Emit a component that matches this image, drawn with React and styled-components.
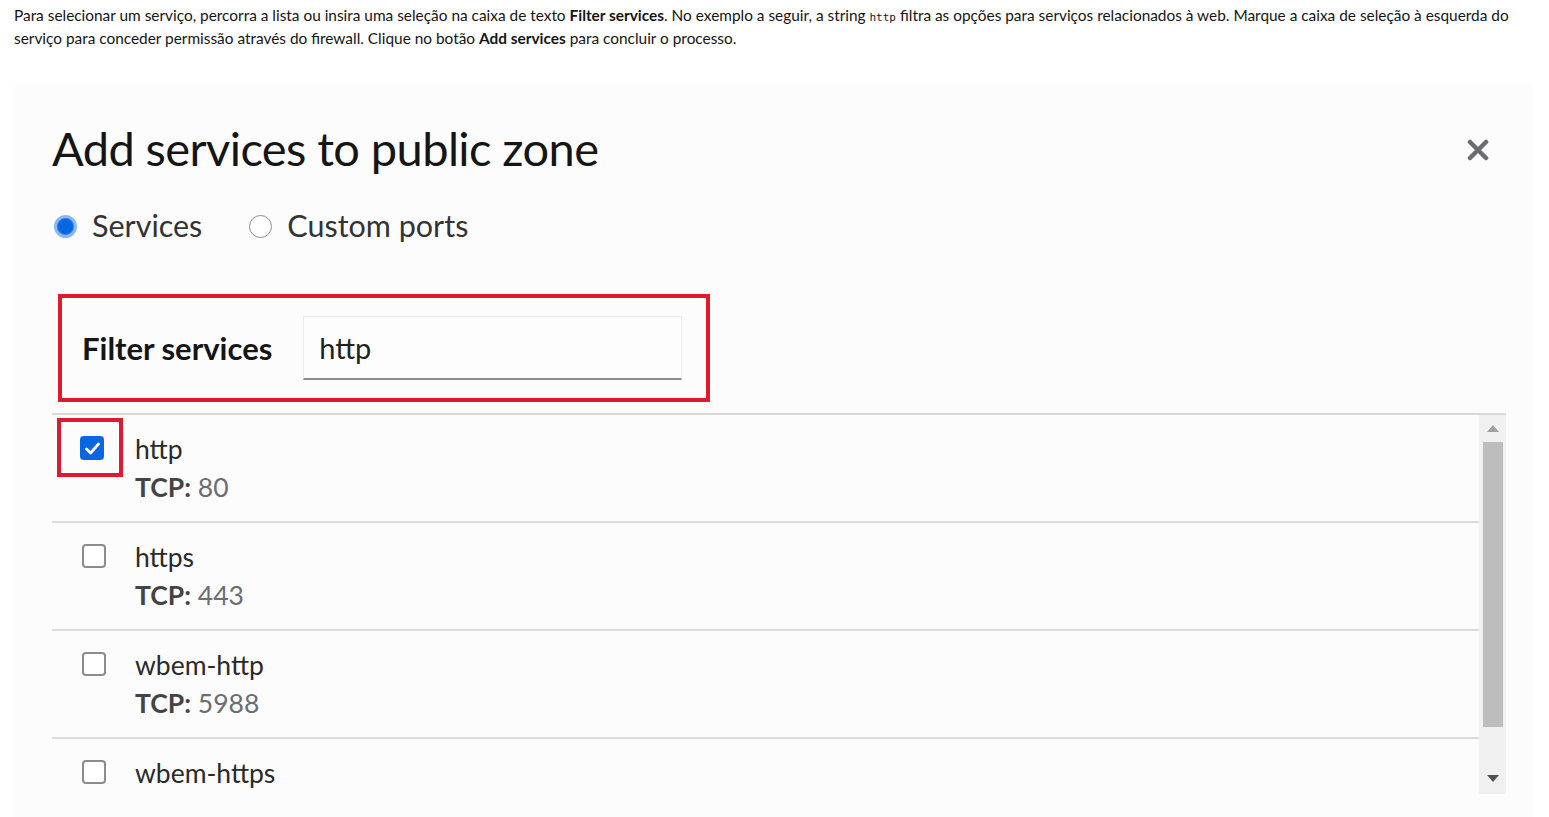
import React from "react";
import styled, { createGlobalStyle } from "styled-components";

const GlobalStyle = createGlobalStyle`
  html, body {
    margin: 0;
    padding: 0;
    background: #ffffff;
    overflow: hidden;
  }
  body {
    font-family: "Lato", "Liberation Sans", sans-serif;
    color: #151515;
  }
`;

const Page = styled.div`
  width: 1549px;
  height: 817px;
  overflow: hidden;
`;

const Intro = styled.p`
  margin: 0;
  padding: 4px 14px 0 14px;
  font-size: 15.4px;
  line-height: 23px;
  color: #151515;
  white-space: nowrap;
  b {
    font-weight: 700;
  }
  code {
    font-family: "DejaVu Sans Mono", monospace;
    font-size: 11px;
    line-height: 0;
  }
`;

const Shot = styled.section`
  margin: 34px 0 0 15px;
  width: 1518px;
  height: 740px;
  background: #fcfcfc;
  box-sizing: border-box;
  padding: 35px 27px 0 37px;
`;

const Header = styled.header`
  display: flex;
  align-items: center;
  justify-content: space-between;
`;

const Title = styled.h1`
  margin: 0;
  font-family: "Lato", sans-serif;
  font-weight: 400;
  font-size: 47px;
  line-height: 58px;
  letter-spacing: -0.6px;
  color: #151515;
`;

const Close = styled.button`
  border: 0;
  background: none;
  padding: 0;
  margin-right: 17px;
  margin-top: 4px;
  width: 22px;
  height: 22px;
  display: flex;
  color: #6a6e73;
`;

const RadioRow = styled.div`
  display: flex;
  align-items: center;
  gap: 47px;
  margin-top: 30px;
  padding-left: 2px;
`;

const RadioOption = styled.label`
  display: flex;
  align-items: center;
  gap: 15px;
  font-size: 30.5px;
  line-height: 36px;
  color: #333;
`;

const RadioDot = styled.span`
  width: 23px;
  height: 23px;
  border-radius: 50%;
  box-sizing: border-box;
  display: inline-block;
  margin-top: 3px;
  border: ${(p) => (p.$on ? "3px solid #8ab8f0" : "1.5px solid #8a8d90")};
  background: ${(p) => (p.$on ? "#0a66e0" : "#fff")};
  box-shadow: ${(p) => (p.$on ? "inset 0 0 0 1px #2f7ee8" : "none")};
`;

const Highlight = styled.div`
  border: 4px solid #e0192c;
  box-sizing: border-box;
`;

const FilterBox = styled(Highlight)`
  margin: 51px 0 0 6px;
  width: 652px;
  height: 108px;
  display: flex;
  align-items: center;
  padding-left: 20px;
  gap: 31px;
`;

const FilterLabel = styled.span`
  font-size: 31px;
  font-weight: 700;
  color: #151515;
`;

const FilterInput = styled.div`
  width: 379px;
  height: 64px;
  box-sizing: border-box;
  border: 1px solid #ececec;
  border-bottom: 2px solid #8a8d90;
  background: #fdfdfd;
  padding-left: 15px;
  display: flex;
  align-items: center;
  font-size: 29px;
  color: #222;
`;

const ListWrap = styled.div`
  margin-top: 11px;
  width: 1454px;
  height: 381px;
  border-top: 2px solid #d8d8d8;
  display: grid;
  grid-template-columns: 1fr 27px;
  overflow: hidden;
`;

const Rows = styled.div`
  display: flex;
  flex-direction: column;
`;

const Row = styled.div`
  height: 108px;
  flex: 0 0 auto;
  border-bottom: 2px solid #dcdcdc;
  display: flex;
  align-items: flex-start;
  padding-top: 17px;
  box-sizing: border-box;
`;

const BoxCell = styled.div`
  width: 83px;
  display: flex;
  justify-content: center;
  padding-top: 4px;
`;

const CheckHighlight = styled(Highlight)`
  width: 66px;
  height: 59px;
  margin-top: -14px;
  margin-left: 5px;
  margin-right: 12px;
  display: flex;
  justify-content: center;
  padding-top: 14px;
  padding-left: 4px;
`;

const Check = styled.span`
  width: 24px;
  height: 24px;
  box-sizing: border-box;
  border-radius: 4px;
  display: flex;
  align-items: center;
  justify-content: center;
  background: ${(p) => (p.$on ? "#0a66e0" : "#fff")};
  border: ${(p) => (p.$on ? "none" : "2px solid #8a8d90")};
`;

const Info = styled.div`
  display: flex;
  flex-direction: column;
  gap: 4px;
`;

const Name = styled.span`
  font-size: 26.5px;
  line-height: 34px;
  color: #2a2a2a;
`;

const Port = styled.span`
  font-size: 26.5px;
  line-height: 34px;
  color: #6a6e73;
  b {
    font-weight: 700;
    color: #444;
  }
`;

const Scrollbar = styled.div`
  background: #f0f0f0;
  height: 379px;
  display: flex;
  flex-direction: column;
  align-items: center;
  padding: 10px 0 0;
  box-sizing: border-box;
`;

const Arrow = styled.span`
  width: 0;
  height: 0;
  border-left: 6px solid transparent;
  border-right: 6px solid transparent;
  ${(p) =>
    p.$down
      ? "border-top: 7px solid #505050; margin-top: 48px;"
      : "border-bottom: 7px solid #a0a0a0;"}
`;

const Thumb = styled.div`
  margin-top: 10px;
  width: 20px;
  height: 285px;
  background: #bdbdbd;
`;

const services = [
  { name: "http", port: "80", checked: true },
  { name: "https", port: "443" },
  { name: "wbem-http", port: "5988" },
  { name: "wbem-https", port: "5989" },
];

const CheckMark = () => (
  <svg width="17" height="15" viewBox="0 0 17 15">
    <path d="M2.5 8 L6.6 12 L14.5 3" fill="none" stroke="#fff" strokeWidth="2.8" strokeLinecap="round" strokeLinejoin="round" />
  </svg>
);

const ServiceRow = ({ item }) => (
  <Row>
    {item.checked ? (
      <CheckHighlight>
        <Check $on>
          <CheckMark />
        </Check>
      </CheckHighlight>
    ) : (
      <BoxCell>
        <Check />
      </BoxCell>
    )}
    <Info>
      <Name>{item.name}</Name>
      <Port>
        <b>TCP:</b> {item.port}
      </Port>
    </Info>
  </Row>
);

export default function App() {
  return (
    <Page>
      <GlobalStyle />
      <Intro>
        Para selecionar um serviço, percorra a lista ou insira uma seleção na caixa de texto <b>Filter services</b>. No exemplo a seguir, a string <code>http</code> filtra as opções para serviços relacionados à web. Marque a caixa de seleção à esquerda do
        <br />
        serviço para conceder permissão através do firewall. Clique no botão <b>Add services</b> para concluir o processo.
      </Intro>
      <Shot>
        <Header>
          <Title>Add services to public zone</Title>
          <Close aria-label="Close">
            <svg width="22" height="22" viewBox="0 0 22 22">
              <path d="M3 3 L19 19 M19 3 L3 19" stroke="currentColor" strokeWidth="4.5" strokeLinecap="round" />
            </svg>
          </Close>
        </Header>
        <RadioRow>
          <RadioOption>
            <RadioDot $on />
            Services
          </RadioOption>
          <RadioOption>
            <RadioDot />
            Custom ports
          </RadioOption>
        </RadioRow>
        <FilterBox>
          <FilterLabel>Filter services</FilterLabel>
          <FilterInput>http</FilterInput>
        </FilterBox>
        <ListWrap>
          <Rows>
            {services.map((s) => (
              <ServiceRow key={s.name} item={s} />
            ))}
          </Rows>
          <Scrollbar>
            <Arrow />
            <Thumb />
            <Arrow $down />
          </Scrollbar>
        </ListWrap>
      </Shot>
    </Page>
  );
}
